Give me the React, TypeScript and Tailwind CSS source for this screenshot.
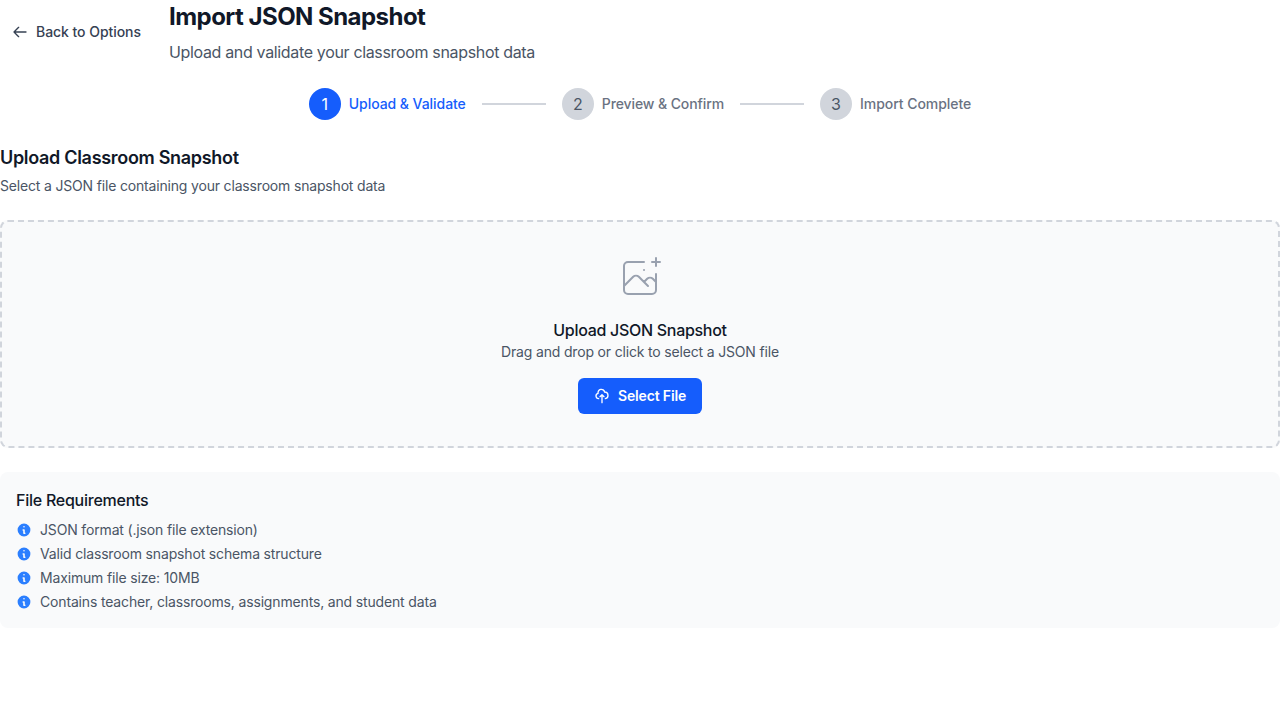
import React from "react";

const steps = [
  { label: "Upload & Validate", tracking: "tracking-[-0.06px]" },
  { label: "Preview & Confirm", tracking: "tracking-[-0.1px]" },
  { label: "Import Complete", tracking: "tracking-[-0.05px]" },
];
const requirements = [
  "JSON format (.json file extension)",
  "Valid classroom snapshot schema structure",
  "Maximum file size: 10MB",
  "Contains teacher, classrooms, assignments, and student data",
];

function InfoIcon() {
  return (
    <svg className="mr-2 h-4 w-4 text-blue-500" fill="currentColor" viewBox="0 0 20 20">
      <path fillRule="evenodd" clipRule="evenodd" d="M18 10a8 8 0 11-16 0 8 8 0 0116 0zm-7-4a1 1 0 11-2 0 1 1 0 012 0zM9 9a1 1 0 000 2v3a1 1 0 001 1h1a1 1 0 100-2v-3a1 1 0 00-1-1H9z" />
    </svg>
  );
}

export default function App() {
  return (
    <div className="space-y-6 font-['Inter',sans-serif]">
      <div className="flex items-center">
        <button className="mr-4 flex h-9 items-center px-3 text-sm font-medium tracking-[-0.05px] text-gray-700">
          <svg className="mr-2 h-4 w-4" fill="none" stroke="currentColor" viewBox="0 0 24 24">
            <path strokeLinecap="round" strokeLinejoin="round" strokeWidth={2} d="M10 19l-7-7m0 0l7-7m-7 7h18" />
          </svg>
          Back to Options
        </button>
        <div>
          <h1 className="pt-px text-2xl font-bold tracking-[-0.53px] text-gray-900">Import JSON Snapshot</h1>
          <p className="mt-[7px] tracking-[-0.34px] text-gray-600">Upload and validate your classroom snapshot data</p>
        </div>
      </div>

      <div className="flex items-center justify-center space-x-4">
        {steps.map(({ label, tracking }, i) => (
          <React.Fragment key={label}>
            {i > 0 && <div className="h-0.5 w-16 bg-gray-300" />}
            <div className={i === 0 ? "flex items-center text-blue-600" : "flex items-center text-gray-500"}>
              <div className={i === 0 ? "flex h-8 w-8 items-center justify-center rounded-full bg-blue-600 text-white" : "flex h-8 w-8 items-center justify-center rounded-full bg-gray-300 text-gray-600"}>
                {i + 1}
              </div>
              <span className={`ml-2 text-sm font-medium ${tracking}`}>{label}</span>
            </div>
          </React.Fragment>
        ))}
      </div>

      <div>
        <h2 className="mb-1 text-lg font-semibold tracking-[-0.31px] text-gray-900">Upload Classroom Snapshot</h2>
        <p className="text-sm tracking-[-0.175px] text-gray-600">Select a JSON file containing your classroom snapshot data</p>
      </div>

      <div className="flex flex-col items-center rounded-lg border-2 border-dashed border-gray-300 bg-gray-50 p-8 text-center">
        <svg className="h-12 w-12 text-gray-400" stroke="currentColor" fill="none" viewBox="0 0 48 48">
          <path d="M28 8H12a4 4 0 00-4 4v20m32-12v8m0 0v8a4 4 0 01-4 4H12a4 4 0 01-4-4v-4m32-4l-3.172-3.172a4 4 0 00-5.656 0L28 28M8 32l9.172-9.172a4 4 0 015.656 0L28 28m0 0l4 4m4-24h8m-4-4v8m-12 4h.02" strokeWidth={2} strokeLinecap="round" strokeLinejoin="round" />
        </svg>
        <h3 className="mt-4 font-medium tracking-[-0.29px] text-gray-900">Upload JSON Snapshot</h3>
        <p className="text-sm tracking-[-0.17px] text-gray-600">Drag and drop or click to select a JSON file</p>
        <button className="mt-4 flex h-9 items-center rounded-md bg-blue-600 px-4 text-sm font-semibold tracking-[-0.16px] text-white">
          <svg className="mr-2 h-4 w-4" fill="none" stroke="currentColor" viewBox="0 0 24 24">
            <path strokeLinecap="round" strokeLinejoin="round" strokeWidth={2} d="M7 16a4 4 0 01-.88-7.903A5 5 0 1115.9 6L16 6a5 5 0 011 9.9M15 13l-3-3m0 0l-3 3m3-3v12" />
          </svg>
          Select File
        </button>
      </div>

      <div className="rounded-lg bg-gray-50 p-4">
        <h4 className="mb-2 font-medium tracking-[-0.25px] text-gray-900">File Requirements</h4>
        <ul className="space-y-1 text-sm tracking-[-0.16px] text-gray-600">
          {requirements.map((text) => (
            <li key={text} className="flex items-center"><InfoIcon />{text}</li>
          ))}
        </ul>
      </div>
    </div>
  );
}
